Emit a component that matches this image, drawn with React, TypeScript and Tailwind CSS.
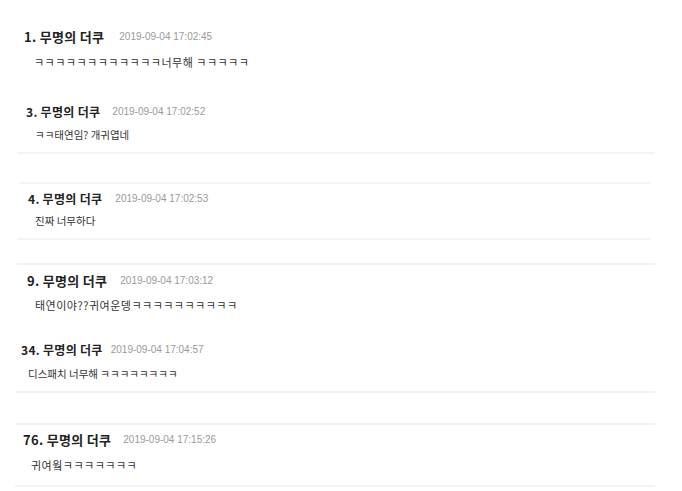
import React from 'react';

type Comment = {
  no: string;
  date: string;
};

const Line: React.FC<{ className: string }> = ({ className }) => (
  <div className={`h-[2px] bg-[#f3f3f3] ${className}`} />
);

// blocks come from crops at slightly different scales, so sizes are per block
const Head: React.FC<{ c: Comment; className: string; gap: string; size: string }> = ({ c, className, gap, size }) => (
  <div className={`flex items-center h-4 ${className}`}>
    <span className={`font-bold text-[#222] leading-4 tracking-[0.3px] ${size}`}>{c.no}. 무명의 더쿠</span>
    <span className={`text-[10px] text-[#999] leading-4 font-['Liberation_Sans'] ${gap}`}>{c.date}</span>
  </div>
);

const Body: React.FC<{ text: string; className: string }> = ({ text, className }) => (
  <div className={`h-4 leading-4 text-[#333] ${className}`}>{text}</div>
);

const App: React.FC = () => {
  return (
    <div className="w-[682px] h-[491px] bg-white overflow-hidden flex flex-col font-['Noto_Sans_CJK_KR','Noto_Sans',sans-serif]">
      {/* 1 */}
      <Head c={{ no: '1', date: '2019-09-04 17:02:45' }} size="text-[13px]" className="mt-[29px] ml-[24px]" gap="ml-[15px]" />
      <Body text="ㅋㅋㅋㅋㅋㅋㅋㅋㅋㅋㅋㅋ너무해 ㅋㅋㅋㅋㅋ" className="text-[11px] tracking-[0.5px] mt-[9px] ml-[34px]" />

      {/* 3 */}
      <Head c={{ no: '3', date: '2019-09-04 17:02:52' }} size="text-[12px]" className="mt-[34px] ml-[26px]" gap="ml-[12px]" />
      <Body text="ㅋㅋ태연임? 개귀엽네" className="text-[10.5px] mt-[7px] ml-[35px]" />
      <Line className="mt-[9px] ml-[17px] w-[638px]" />

      {/* 4 */}
      <Line className="mt-[28px] ml-[20px] w-[631px]" />
      <Head c={{ no: '4', date: '2019-09-04 17:02:53' }} size="text-[12px]" className="mt-[7px] ml-[28px]" gap="ml-[13px]" />
      <Body text="진짜 너무하다" className="text-[10.5px] mt-[6px] ml-[35px]" />
      <Line className="mt-[9px] ml-[17px] w-[634px]" />

      {/* 9 */}
      <Line className="mt-[23px] ml-[17px] w-[638px]" />
      <Head c={{ no: '9', date: '2019-09-04 17:03:12' }} size="text-[13px]" className="mt-[8px] ml-[27px]" gap="ml-[13px]" />
      <Body text="태연이야??귀여운뎅ㅋㅋㅋㅋㅋㅋㅋㅋㅋㅋ" className="text-[11px] tracking-[0.5px] mt-[8px] ml-[35px]" />

      {/* 34 */}
      <Head c={{ no: '34', date: '2019-09-04 17:04:57' }} size="text-[12px]" className="mt-[29px] ml-[21px]" gap="ml-[8px]" />
      <Body text="디스패치 너무해 ㅋㅋㅋㅋㅋㅋㅋㅋ" className="text-[10.5px] mt-[8px] ml-[28px]" />
      <Line className="mt-[9px] ml-[15px] w-[640px]" />

      {/* 76 */}
      <Line className="mt-[30px] ml-[15px] w-[640px]" />
      <Head c={{ no: '76', date: '2019-09-04 17:15:26' }} size="text-[13px]" className="mt-[7px] ml-[23px]" gap="ml-[12px]" />
      <Body text="귀여웤ㅋㅋㅋㅋㅋㅋㅋ" className="text-[11px] tracking-[0.5px] mt-[9px] ml-[31px]" />
      <Line className="mt-[12px] ml-[15px] w-[640px]" />
    </div>
  );
};

export default App;
